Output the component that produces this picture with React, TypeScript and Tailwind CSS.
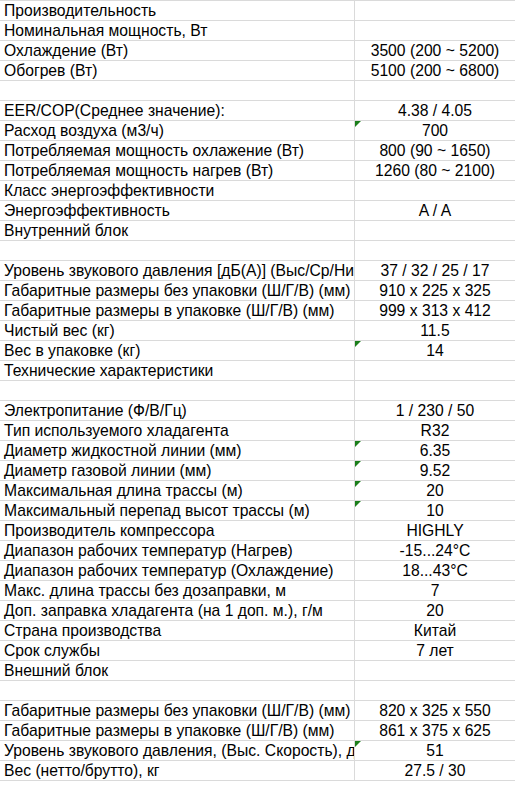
type Row = { label?: string; value?: string; flag?: boolean };

const rows: Row[] = [
  { label: "Производительность" },
  { label: "Номинальная мощность, Вт" },
  { label: "Охлаждение (Вт)", value: "3500 (200 ~ 5200)" },
  { label: "Обогрев (Вт)", value: "5100 (200 ~ 6800)" },
  {},
  { label: "EER/COP(Среднее значение):", value: "4.38 / 4.05" },
  { label: "Расход воздуха (м3/ч)", value: "700", flag: true },
  { label: "Потребляемая мощность охлажение (Вт)", value: "800 (90 ~ 1650)" },
  { label: "Потребляемая мощность нагрев (Вт)", value: "1260 (80 ~ 2100)" },
  { label: "Класс энергоэффективности" },
  { label: "Энергоэффективность", value: "A / A" },
  { label: "Внутренний блок" },
  {},
  { label: "Уровень звукового давления [дБ(А)] (Выс/Ср/Ни", value: "37 / 32 / 25 / 17" },
  { label: "Габаритные размеры без упаковки (Ш/Г/В) (мм)", value: "910 x 225 x 325" },
  { label: "Габаритные размеры в упаковке (Ш/Г/В) (мм)", value: "999 x 313 x 412" },
  { label: "Чистый вес (кг)", value: "11.5" },
  { label: "Вес в упаковке (кг)", value: "14", flag: true },
  { label: "Технические характеристики" },
  {},
  { label: "Электропитание (Ф/В/Гц)", value: "1 / 230 / 50" },
  { label: "Тип используемого хладагента", value: "R32" },
  { label: "Диаметр жидкостной линии (мм)", value: "6.35", flag: true },
  { label: "Диаметр газовой линии (мм)", value: "9.52", flag: true },
  { label: "Максимальная длина трассы (м)", value: "20", flag: true },
  { label: "Максимальный перепад высот трассы (м)", value: "10", flag: true },
  { label: "Производитель компрессора", value: "HIGHLY" },
  { label: "Диапазон рабочих температур (Нагрев)", value: "-15...24°C" },
  { label: "Диапазон рабочих температур (Охлаждение)", value: "18...43°C" },
  { label: "Макс. длина трассы без дозаправки, м", value: "7" },
  { label: "Доп. заправка хладагента (на 1 доп. м.), г/м", value: "20" },
  { label: "Страна производства", value: "Китай" },
  { label: "Срок службы", value: "7 лет" },
  { label: "Внешний блок" },
  {},
  { label: "Габаритные размеры без упаковки (Ш/Г/В) (мм)", value: "820 x 325 x 550" },
  { label: "Габаритные размеры в упаковке (Ш/Г/В) (мм)", value: "861 x 375 x 625" },
  { label: "Уровень звукового давления, (Выс. Скорость), д", value: "51", flag: true },
  { label: "Вес (нетто/брутто), кг", value: "27.5 / 30" },
];

export default function App() {
  return (
    <div className="w-[515px] h-[800px] bg-white text-black text-[15.7px] font-['Liberation_Sans',Arial,sans-serif] overflow-hidden">
      <div className="border-b border-[#dadada]">
        {rows.map((row, i) => (
          <div key={i} className="flex h-[20px] border-t border-[#dadada] leading-[20px]">
            <div className="w-[354px] shrink-0 overflow-hidden whitespace-nowrap pl-[4px]">
              {row.label}
            </div>
            <div className="relative flex-1 border-l border-[#dadada] text-center whitespace-nowrap">
              {/* green "number stored as text" marker */}
              {row.flag && (
                <svg className="absolute left-0 top-0" width="6" height="6" viewBox="0 0 6 6">
                  <polygon points="0,0 6,0 0,6" fill="#1b7f1b" />
                </svg>
              )}
              {row.value}
            </div>
          </div>
        ))}
      </div>
    </div>
  );
}
